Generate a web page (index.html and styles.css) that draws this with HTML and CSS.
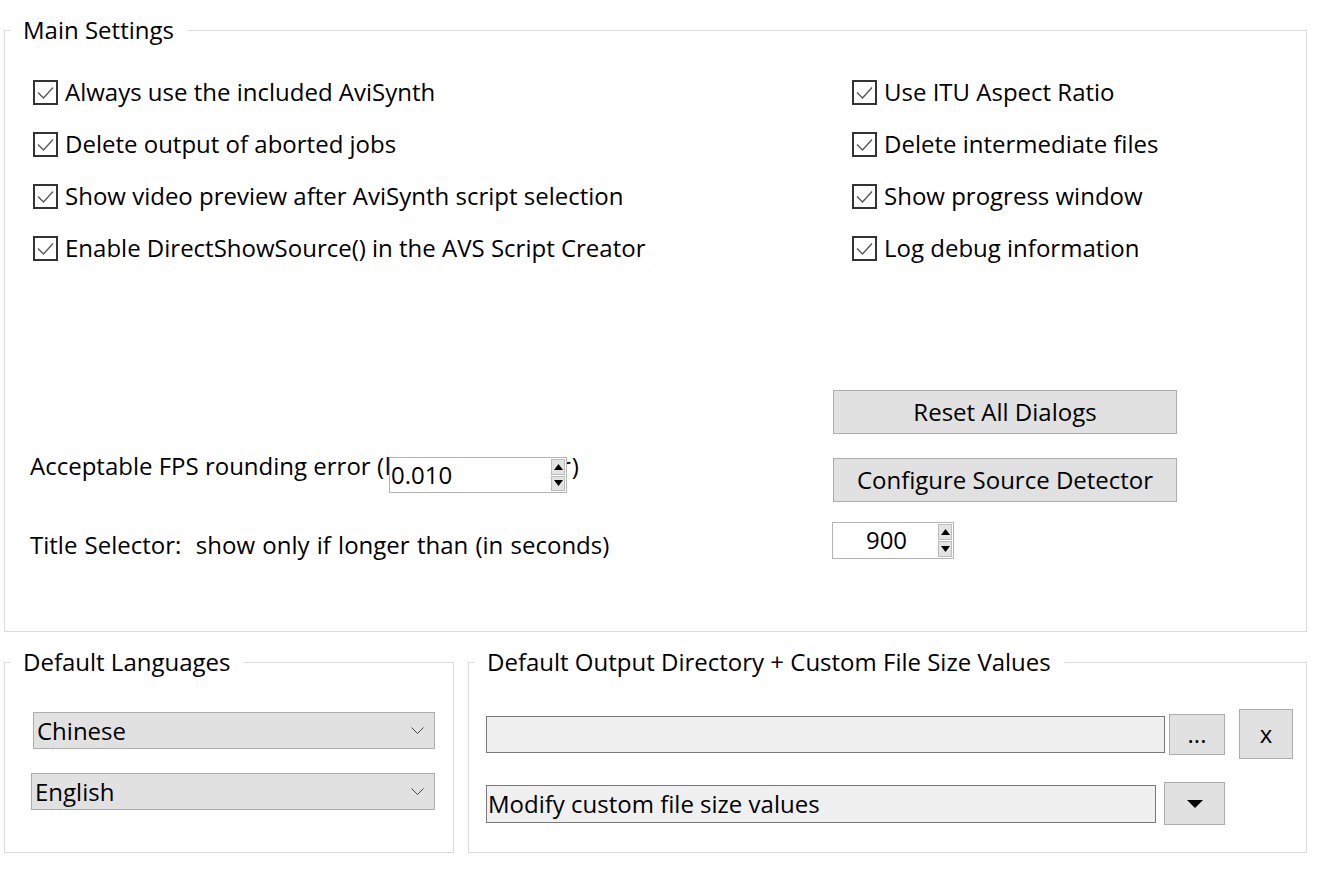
FILE: index.html
```html
<!DOCTYPE html>
<html>
<head>
<meta charset="utf-8">
<link rel="stylesheet" href="styles.css">
</head>
<body>
<div class="page">
  <fieldset class="group main">
    <legend>Main Settings</legend>
    <div class="main-body">
      <div class="col-left">
        <div class="check"><svg class="cb" width="25" height="25" viewBox="0 0 25 25"><rect x="1" y="1" width="23" height="23" fill="#fff" stroke="#333" stroke-width="2"/><path d="M5 12.5 L10.5 18 L20 7.5" fill="none" stroke="#555" stroke-width="1.3"/></svg><span>Always use the included AviSynth</span></div>
        <div class="check"><svg class="cb" width="25" height="25" viewBox="0 0 25 25"><rect x="1" y="1" width="23" height="23" fill="#fff" stroke="#333" stroke-width="2"/><path d="M5 12.5 L10.5 18 L20 7.5" fill="none" stroke="#555" stroke-width="1.3"/></svg><span>Delete output of aborted jobs</span></div>
        <div class="check"><svg class="cb" width="25" height="25" viewBox="0 0 25 25"><rect x="1" y="1" width="23" height="23" fill="#fff" stroke="#333" stroke-width="2"/><path d="M5 12.5 L10.5 18 L20 7.5" fill="none" stroke="#555" stroke-width="1.3"/></svg><span>Show video preview after AviSynth script selection</span></div>
        <div class="check"><svg class="cb" width="25" height="25" viewBox="0 0 25 25"><rect x="1" y="1" width="23" height="23" fill="#fff" stroke="#333" stroke-width="2"/><path d="M5 12.5 L10.5 18 L20 7.5" fill="none" stroke="#555" stroke-width="1.3"/></svg><span>Enable DirectShowSource() in the AVS Script Creator</span></div>
        <div class="field-label fps">Acceptable FPS rounding error <span class="paren">(lower is stricter)</span>
          <div class="spin spin-fps">
            <span class="spin-value">0.010</span>
            <span class="spin-btns">
              <span class="spin-up"><svg width="9" height="6" viewBox="0 0 9 6"><path d="M0 6 L4.5 0 L9 6 Z" fill="#000"/></svg></span>
              <span class="spin-down"><svg width="9" height="6" viewBox="0 0 9 6"><path d="M0 0 L4.5 6 L9 0 Z" fill="#000"/></svg></span>
            </span>
          </div>
        </div>
        <div class="field-label title-sel">Title Selector:&nbsp; show only if longer than (in seconds)</div>
      </div>
      <div class="col-right">
        <div class="check"><svg class="cb" width="25" height="25" viewBox="0 0 25 25"><rect x="1" y="1" width="23" height="23" fill="#fff" stroke="#333" stroke-width="2"/><path d="M5 12.5 L10.5 18 L20 7.5" fill="none" stroke="#555" stroke-width="1.3"/></svg><span>Use ITU Aspect Ratio</span></div>
        <div class="check"><svg class="cb" width="25" height="25" viewBox="0 0 25 25"><rect x="1" y="1" width="23" height="23" fill="#fff" stroke="#333" stroke-width="2"/><path d="M5 12.5 L10.5 18 L20 7.5" fill="none" stroke="#555" stroke-width="1.3"/></svg><span>Delete intermediate files</span></div>
        <div class="check"><svg class="cb" width="25" height="25" viewBox="0 0 25 25"><rect x="1" y="1" width="23" height="23" fill="#fff" stroke="#333" stroke-width="2"/><path d="M5 12.5 L10.5 18 L20 7.5" fill="none" stroke="#555" stroke-width="1.3"/></svg><span>Show progress window</span></div>
        <div class="check"><svg class="cb" width="25" height="25" viewBox="0 0 25 25"><rect x="1" y="1" width="23" height="23" fill="#fff" stroke="#333" stroke-width="2"/><path d="M5 12.5 L10.5 18 L20 7.5" fill="none" stroke="#555" stroke-width="1.3"/></svg><span>Log debug information</span></div>
        <div class="btn btn-reset">Reset All Dialogs</div>
        <div class="btn btn-config">Configure Source Detector</div>
        <div class="spin spin-900">
          <span class="spin-value">900</span>
          <span class="spin-btns">
            <span class="spin-up"><svg width="9" height="6" viewBox="0 0 9 6"><path d="M0 6 L4.5 0 L9 6 Z" fill="#000"/></svg></span>
            <span class="spin-down"><svg width="9" height="6" viewBox="0 0 9 6"><path d="M0 0 L4.5 6 L9 0 Z" fill="#000"/></svg></span>
          </span>
        </div>
      </div>
    </div>
  </fieldset>

  <div class="bottom-row">
    <fieldset class="group langs">
      <legend>Default Languages</legend>
      <div class="langs-body">
        <div class="combo combo-1"><span>Chinese</span><svg width="13" height="7" viewBox="0 0 13 7"><path d="M0.5 0.5 L6.5 6.5 L12.5 0.5" fill="none" stroke="#444" stroke-width="1"/></svg></div>
        <div class="combo combo-2"><span>English</span><svg width="13" height="7" viewBox="0 0 13 7"><path d="M0.5 0.5 L6.5 6.5 L12.5 0.5" fill="none" stroke="#444" stroke-width="1"/></svg></div>
      </div>
    </fieldset>
    <fieldset class="group output">
      <legend>Default Output Directory + Custom File Size Values</legend>
      <div class="output-body">
        <div class="out-row row-dir">
          <div class="textbox tb-dir"></div>
          <div class="btn btn-browse">...</div>
          <div class="btn btn-clear">x</div>
        </div>
        <div class="out-row row-size">
          <div class="textbox tb-size">Modify custom file size values</div>
          <div class="btn btn-drop"><svg width="16" height="8" viewBox="0 0 16 8"><path d="M0 0 L16 0 L8 8 Z" fill="#000"/></svg></div>
        </div>
      </div>
    </fieldset>
  </div>
</div>
</body>
</html>
```

FILE: styles.css
```css
* { box-sizing: border-box; }

html, body {
  margin: 0;
  padding: 0;
  background: #ffffff;
}

body {
  font-family: "Open Sans", "Noto Sans", sans-serif;
  font-size: 24px;
  line-height: 32px;
  color: #000;
}

.page {
  padding: 14px 16px 0 4px;
}

.group {
  margin: 0;
  padding: 0;
  border: 1px solid #dcdcdc;
  min-width: 0;
}

.group > legend {
  margin-left: 6px;
  padding: 0 14px 0 12px;
  font-size: 24px;
  line-height: 32px;
}

/* Main settings */
.main-body {
  display: flex;
  padding: 20px 0 70px 28px;
}

.col-left {
  flex: none;
  width: 799px;
  display: flex;
  flex-direction: column;
}

.col-right {
  flex: none;
  display: flex;
  flex-direction: column;
  align-items: flex-start;
}

.check {
  display: flex;
  align-items: center;
  height: 52px;
  gap: 7px;
  white-space: nowrap;
}

.col-right .check {
  margin-left: 20px;
}

.cb { flex: none; }

.field-label {
  position: relative;
  white-space: nowrap;
  margin-left: -3px;
}

.paren { letter-spacing: 0.9px; }

.fps { margin-top: 176px; }
.title-sel { margin-top: 47px; word-spacing: 1px; }

.btn {
  display: flex;
  align-items: center;
  justify-content: center;
  background: #e1e1e1;
  border: 1px solid #adadad;
  white-space: nowrap;
}

.btn-reset {
  margin-top: 116px;
  margin-left: 1px;
  width: 344px;
  height: 44px;
}

.btn-config {
  margin-top: 24px;
  margin-left: 1px;
  width: 344px;
  height: 44px;
}

/* Spinners */
.spin {
  display: flex;
  align-items: stretch;
  background: #fff;
  border: 1px solid #b4b4b4;
  letter-spacing: 0;
}

.spin-value {
  flex: 1;
  line-height: 34px;
}

.spin-btns {
  flex: none;
  width: 14px;
  display: flex;
  flex-direction: column;
  justify-content: center;
  gap: 1px;
  margin: 1px 1px 1px 0;
}

.spin-up, .spin-down {
  flex: 1;
  display: flex;
  align-items: center;
  justify-content: center;
  background: #e3e3e3;
  border: 1px solid #bcbcbc;
}

.spin-fps {
  position: absolute;
  left: 359px;
  top: 7px;
  width: 178px;
  height: 36px;
  padding-left: 1px;
}

.spin-fps .spin-value {
  line-height: 33px;
}

.spin-900 {
  margin-top: 20px;
  width: 122px;
  height: 37px;
}

.spin-900 .spin-value {
  text-align: center;
  padding-left: 2px;
}

/* Bottom row */
.bottom-row {
  display: flex;
  gap: 14px;
  margin-top: 14px;
}

.langs {
  flex: none;
  width: 450px;
}

.output {
  flex: none;
  width: 839px;
}

.langs-body {
  padding: 34px 0 41px 0;
  display: flex;
  flex-direction: column;
  gap: 24px;
}

.combo {
  display: flex;
  align-items: center;
  justify-content: space-between;
  height: 37px;
  background: #e1e1e1;
  border: 1px solid #adadad;
  padding: 0 10px 0 3px;
}

.combo-1 { margin-left: 28px; width: 402px; }
.combo-2 { margin-left: 26px; width: 404px; }

.output-body {
  padding: 31px 0 27px 17px;
  display: flex;
  flex-direction: column;
  gap: 23px;
}

.out-row {
  display: flex;
  align-items: center;
}

.textbox {
  background: #f0f0f0;
  border: 1px solid #7a7a7a;
  padding-left: 1px;
  display: flex;
  align-items: center;
  white-space: nowrap;
}

.tb-dir { width: 679px; height: 37px; }
.tb-size { width: 670px; height: 38px; }

.btn-browse {
  margin-left: 4px;
  width: 56px;
  height: 41px;
}

.btn-clear {
  margin-left: 14px;
  width: 54px;
  height: 50px;
}

.btn-drop {
  margin-left: 8px;
  width: 61px;
  height: 43px;
}
```
